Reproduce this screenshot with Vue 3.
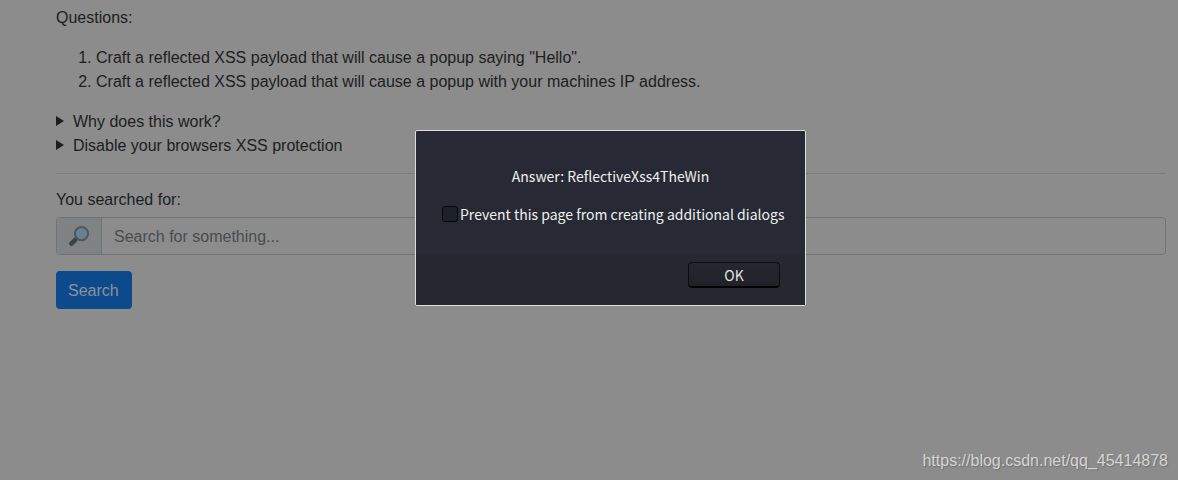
<script setup>
import { ref } from 'vue';

const questions = [
  'Craft a reflected XSS payload that will cause a popup saying "Hello".',
  'Craft a reflected XSS payload that will cause a popup with your machines IP address.'
];

const hints = ['Why does this work?', 'Disable your browsers XSS protection'];

const keyword = ref('');
const preventDialogs = ref(false);
const dialogOpen = ref(true);
</script>

<template>
  <main class="page">
    <p class="intro">Questions:</p>
    <ol class="questions">
      <li v-for="question in questions" :key="question">{{ question }}</li>
    </ol>

    <details v-for="hint in hints" :key="hint">
      <summary>{{ hint }}</summary>
    </details>

    <hr />

    <form @submit.prevent>
      <label class="search-label" for="keyword">You searched for:</label>
      <div class="input-group">
        <span class="input-icon">
          <svg width="22" height="22" viewBox="0 0 22 22" aria-hidden="true">
            <path d="M9.5 12.5 7.5 14.5" stroke="#59656d" stroke-width="2" />
            <path d="M7.2 14.8 3.4 18.6" stroke="#3c444a" stroke-width="4.6" stroke-linecap="round" />
            <circle cx="13.5" cy="8.6" r="6.6" fill="#6c7f8e" stroke="#4c575f" stroke-width="2" />
          </svg>
        </span>
        <input id="keyword" v-model="keyword" type="text" placeholder="Search for something..." />
      </div>
      <button class="search-btn" type="submit">Search</button>
    </form>
  </main>

  <div v-if="dialogOpen" class="overlay">
    <div class="dialog" role="dialog" aria-label="Answer">
      <div class="dialog-body">
        <p class="answer">Answer: ReflectiveXss4TheWin</p>
        <label class="prevent">
          <input v-model="preventDialogs" type="checkbox" />
          <span>Prevent this page from creating additional dialogs</span>
        </label>
      </div>
      <div class="dialog-footer">
        <button class="ok-btn" type="button" @click="dialogOpen = false">OK</button>
      </div>
    </div>
  </div>

  <div class="watermark">https://blog.csdn.net/qq_45414878</div>
</template>

<style>
body {
  margin: 0;
  background: #8c8c8c;
}
</style>

<style scoped>
* {
  box-sizing: border-box;
}

.page {
  padding: 6px 12px 0 56px;
  font: 16px/24px "Liberation Sans", Arial, sans-serif;
  color: #1c1e20;
}

.intro {
  margin: 0 0 16px;
}

.questions {
  margin: 0 0 16px;
  padding-left: 40px;
}

summary {
  display: flex;
  align-items: center;
  gap: 9px;
  list-style: none;
  cursor: pointer;
}
summary::before {
  content: "";
  margin-bottom: 2px;
  border-left: 8px solid #1c1e20;
  border-top: 5px solid transparent;
  border-bottom: 5px solid transparent;
}

hr {
  margin: 15px 0 14px;
  border: 0;
  border-top: 1px solid #7d7d7d;
}

.search-label {
  display: block;
  margin-bottom: 5px;
}

.input-group {
  display: flex;
  height: 38px;
  margin-bottom: 16px;
  border: 1px solid #717476;
  border-radius: 4px;
  overflow: hidden;
}

.input-icon {
  display: flex;
  flex: none;
  align-items: center;
  justify-content: center;
  width: 45px;
  background: #808284;
  border-right: 1px solid #717476;
}

.input-group input {
  flex: 1;
  min-width: 0;
  padding: 2px 12px 0;
  border: 0;
  outline: 0;
  background: transparent;
  font: inherit;
  color: #1c1e20;
}
.input-group input::placeholder {
  color: #484c50;
  opacity: 1;
}

.search-btn {
  height: 38px;
  padding: 2px 13px 0 12px;
  border: 0;
  border-radius: 4px;
  background: #0c4a8c;
  font: inherit;
  color: #8c9299;
}

/* the dialog floats over the dimmed page */
.overlay {
  position: absolute;
  top: 130px;
  left: 43px;
  right: 0;
  display: flex;
  justify-content: center;
}

.dialog {
  width: 391px;
  border: 1px solid #dcdddd;
  border-radius: 2px;
  background: #272a34;
  font: 14px/18px "Noto Sans CJK SC", "Liberation Sans", sans-serif;
  color: #f0f0f0;
  overflow: hidden;
}

.dialog-body {
  padding: 36px 24px 31px;
}

.answer {
  margin: 0 0 20px;
  text-align: center;
}

.prevent {
  display: flex;
  align-items: center;
  gap: 2px;
  padding-left: 2px;
  white-space: nowrap;
}
.prevent input {
  appearance: none;
  flex: none;
  width: 16px;
  height: 16px;
  margin: 0;
  border: 1px solid #050607;
  border-radius: 3px;
  background: #1e2127;
}
.prevent input:checked {
  background: #5a606c;
}

.dialog-footer {
  display: flex;
  justify-content: flex-end;
  padding: 8px 25px 17px;
  background: #25282f;
}

.ok-btn {
  width: 92px;
  height: 26px;
  padding: 0;
  border: 1px solid #0c0d10;
  border-bottom: 2px solid #030303;
  border-radius: 4px;
  background: linear-gradient(#24272e, #1f2229);
  font: inherit;
  color: #e2e2e2;
}

.watermark {
  position: absolute;
  right: 10px;
  bottom: 8px;
  font: 16px/22px "Liberation Sans", Arial, sans-serif;
  color: #d4d4d4;
  text-shadow: 1px 1px 1px #707070;
}
</style>
